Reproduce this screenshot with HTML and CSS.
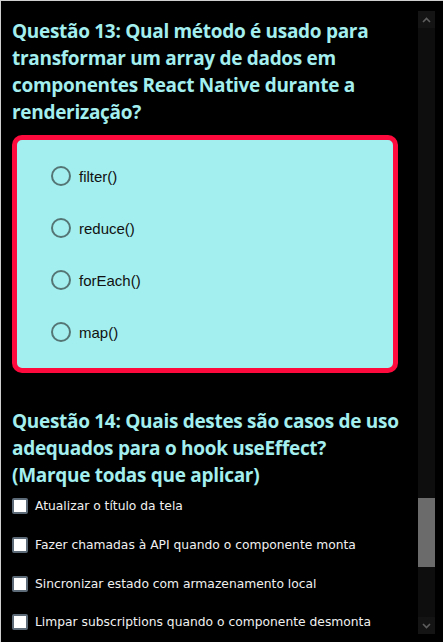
FILE: index.html
```html
<!DOCTYPE html>
<html lang="pt">
<head>
<meta charset="utf-8">
<title>Quiz</title>
<link rel="stylesheet" href="styles.css">
</head>
<body>
<div class="frame">
  <div class="content">
    <section class="question q13">
      <h2 class="q-title"><span class="q-num">Questão 13:</span> Qual método é usado para transformar um array de dados em componentes React Native durante a renderização?</h2>
      <div class="card">
        <label class="radio-row"><span class="radio"></span><span class="radio-text">filter()</span></label>
        <label class="radio-row"><span class="radio"></span><span class="radio-text">reduce()</span></label>
        <label class="radio-row"><span class="radio"></span><span class="radio-text">forEach()</span></label>
        <label class="radio-row"><span class="radio"></span><span class="radio-text">map()</span></label>
      </div>
    </section>
    <section class="question q14">
      <h2 class="q-title"><span class="q-num">Questão 14:</span> Quais destes são casos de uso adequados para o hook useEffect?<br>(Marque todas que aplicar)</h2>
      <div class="checks">
        <label class="check-row"><span class="box"></span><span class="check-text">Atualizar o título da tela</span></label>
        <label class="check-row"><span class="box"></span><span class="check-text">Fazer chamadas à API quando o componente monta</span></label>
        <label class="check-row"><span class="box"></span><span class="check-text">Sincronizar estado com armazenamento local</span></label>
        <label class="check-row"><span class="box"></span><span class="check-text">Limpar subscriptions quando o componente desmonta</span></label>
      </div>
    </section>
  </div>
  <div class="scrollbar">
    <div class="sb-btn"><svg width="9" height="6" viewBox="0 0 9 6"><path d="M1 5 L4.5 1.5 L8 5" fill="none" stroke="#5e5e5e" stroke-width="1.6"/></svg></div>
    <div class="sb-track">
      <div class="sb-thumb"></div>
    </div>
    <div class="sb-btn"><svg width="9" height="6" viewBox="0 0 9 6"><path d="M1 1 L4.5 4.5 L8 1" fill="none" stroke="#5e5e5e" stroke-width="1.6"/></svg></div>
  </div>
</div>
</body>
</html>
```

FILE: styles.css
```css
html, body {
  margin: 0;
  padding: 0;
  background: #000;
}
.frame {
  width: 442px;
  height: 641px;
  border-top: 1px solid #cfcfcf;
  border-left: 1px solid #cfcfcf;
  background: #000;
  display: flex;
  overflow: hidden;
}
.content {
  flex: 1;
  padding: 17px 0 0 11px;
  overflow: hidden;
  min-width: 0;
}
.q-title {
  margin: 0;
  font-family: "Open Sans", "Noto Sans", sans-serif;
  font-weight: 700;
  font-size: 19px;
  line-height: 27px;
  color: #a3eeee;
  letter-spacing: -0.3px;
}
.card {
  margin-top: 9px;
  width: 376px;
  background: #a3efef;
  border: 5px solid #ff0a3c;
  border-radius: 10px;
  padding: 10px 0;
  display: flex;
  flex-direction: column;
}
.radio-row {
  display: flex;
  align-items: center;
  height: 52px;
  padding-left: 34px;
}
.radio {
  width: 16px;
  height: 16px;
  border: 2px solid #557575;
  border-radius: 50%;
  flex: none;
}
.radio-text {
  margin-left: 8px;
  font-family: "Liberation Sans", Arial, sans-serif;
  font-size: 15px;
  color: #111;
}
.q14 {
  margin-top: 35px;
}
.checks {
  margin-top: -2px;
  display: flex;
  flex-direction: column;
}
.check-row {
  display: flex;
  align-items: center;
  height: 38.7px;
}
.box {
  width: 12px;
  height: 12px;
  background: #fff;
  border: 2px solid #5d6b78;
  border-radius: 2px;
  flex: none;
}
.check-text {
  margin-left: 7px;
  font-family: "DejaVu Sans", sans-serif;
  font-size: 12.3px;
  color: #f0f0f0;
}
.scrollbar {
  width: 17px;
  flex: none;
  margin: 10px 8px 8px 0;
  background: #0e0e0e;
  display: flex;
  flex-direction: column;
}
.sb-btn {
  height: 17px;
  background: #141414;
  display: flex;
  align-items: center;
  justify-content: center;
  flex: none;
}
.sb-track {
  flex: 1;
  padding-top: 470px;
}
.sb-thumb {
  height: 69px;
  background: #6b6b6b;
}
```
